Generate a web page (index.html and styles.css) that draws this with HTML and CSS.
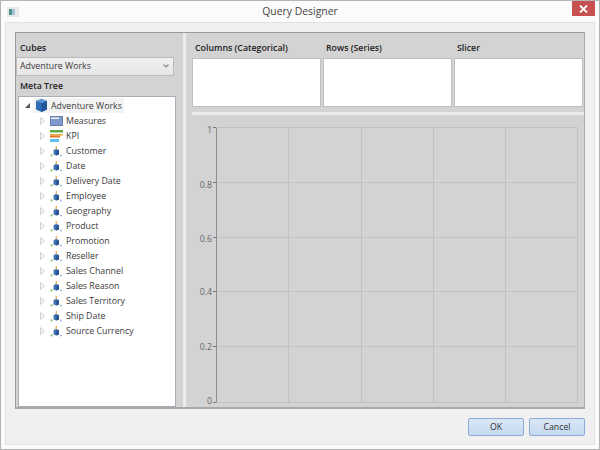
FILE: index.html
```html
<!DOCTYPE html>
<html lang="en">
<head>
  <meta charset="UTF-8">
  <title>Query Designer</title>
  <link rel="stylesheet" href="styles.css">
</head>
<body>
  <svg width="0" height="0" class="defs">
    <symbol id="dim" viewBox="0 0 13 12">
      <rect x="5.6" y="1" width="1.4" height="3.5" fill="#f0b060"/>
      <path d="M6.3 4 L9 5 V9.6 L6.3 10.6 L3.6 9.6 V5 Z" fill="#3f6fae"/>
      <path d="M6.3 6 L9 5 V9.6 L6.3 10.6 Z" fill="#2a5491"/>
      <circle cx="1.6" cy="10.4" r="1.1" fill="#8cc46e"/>
      <circle cx="11" cy="10.4" r="1" fill="#9db8dc"/>
    </symbol>
  </svg>
  <div class="window">
    <div class="titlebar">
      <svg class="app-icon" width="12" height="10" viewBox="0 0 12 10">
        <rect x="0" y="0" width="12" height="10" fill="#e6eae8"/>
        <rect x="2" y="2" width="3" height="6" fill="#4f9488"/>
        <rect x="5" y="2" width="3" height="6" fill="#a8c4d8"/>
      </svg>
      <span class="title">Query Designer</span>
      <div class="close">
        <svg width="9" height="8" viewBox="0 0 9 8">
          <path d="M1 0.5 L8 7.5 M8 0.5 L1 7.5" stroke="#fff" stroke-width="1.8"/>
        </svg>
      </div>
    </div>
    <div class="client">
      <div class="main">
        <div class="left">
          <div class="label cubes-label">Cubes</div>
          <div class="combo">
            <span>Adventure Works</span>
            <svg width="6" height="4" viewBox="0 0 6 4"><path d="M0.5 0.5 L3 3 L5.5 0.5" stroke="#888" stroke-width="1.1" fill="none"/></svg>
          </div>
          <div class="label tree-label">Meta Tree</div>
          <div class="tree">
            <div class="row root">
              <svg class="arrow" width="5" height="5" viewBox="0 0 5 5"><path d="M5 0 V5 H0 Z" fill="#555"/></svg>
              <div class="root-item">
                <svg width="11" height="13" viewBox="0 0 11 13">
                  <path d="M5.5 0 L11 2 V10.5 L5.5 13 L0 10.5 V2 Z" fill="#2f6cb4"/>
                  <path d="M5.5 4 L11 2 V10.5 L5.5 13 Z" fill="#1f5597"/>
                  <path d="M5.5 0 L11 2 L5.5 4 L0 2 Z" fill="#5c93d0"/>
                </svg>
                <span>Adventure Works</span>
              </div>
            </div>
            <div class="row">
              <svg class="arrow" width="5" height="8" viewBox="0 0 5 8"><path d="M0.5 0.5 L4.5 4 L0.5 7.5 Z" fill="#f6f6f6" stroke="#d0d0d0"/></svg>
              <svg class="icon" width="13" height="10" viewBox="0 0 13 10">
                <rect x="0.5" y="0.5" width="12" height="9" fill="#7f9aca" stroke="#6680ad"/>
                <rect x="1" y="1.5" width="8" height="1.5" fill="#eef2f8"/>
              </svg>
              <span>Measures</span>
            </div>
            <div class="row">
              <svg class="arrow" width="5" height="8" viewBox="0 0 5 8"><path d="M0.5 0.5 L4.5 4 L0.5 7.5 Z" fill="#f6f6f6" stroke="#d0d0d0"/></svg>
              <svg class="icon" width="13" height="12" viewBox="0 0 13 12">
                <rect x="0" y="0" width="13" height="2.5" fill="#5fa84a"/>
                <rect x="0" y="4" width="13" height="1.5" fill="#e9a33c"/>
                <rect x="0" y="5.5" width="10" height="2" fill="#e07a28"/>
                <rect x="0" y="9" width="9" height="3" fill="#5cc0ee"/>
              </svg>
              <span>KPI</span>
            </div>
            <div class="row"><svg class="arrow" width="5" height="8" viewBox="0 0 5 8"><path d="M0.5 0.5 L4.5 4 L0.5 7.5 Z" fill="#f6f6f6" stroke="#d0d0d0"/></svg><svg class="icon" width="13" height="12"><use href="#dim"/></svg><span>Customer</span></div>
            <div class="row"><svg class="arrow" width="5" height="8" viewBox="0 0 5 8"><path d="M0.5 0.5 L4.5 4 L0.5 7.5 Z" fill="#f6f6f6" stroke="#d0d0d0"/></svg><svg class="icon" width="13" height="12"><use href="#dim"/></svg><span>Date</span></div>
            <div class="row"><svg class="arrow" width="5" height="8" viewBox="0 0 5 8"><path d="M0.5 0.5 L4.5 4 L0.5 7.5 Z" fill="#f6f6f6" stroke="#d0d0d0"/></svg><svg class="icon" width="13" height="12"><use href="#dim"/></svg><span>Delivery Date</span></div>
            <div class="row"><svg class="arrow" width="5" height="8" viewBox="0 0 5 8"><path d="M0.5 0.5 L4.5 4 L0.5 7.5 Z" fill="#f6f6f6" stroke="#d0d0d0"/></svg><svg class="icon" width="13" height="12"><use href="#dim"/></svg><span>Employee</span></div>
            <div class="row"><svg class="arrow" width="5" height="8" viewBox="0 0 5 8"><path d="M0.5 0.5 L4.5 4 L0.5 7.5 Z" fill="#f6f6f6" stroke="#d0d0d0"/></svg><svg class="icon" width="13" height="12"><use href="#dim"/></svg><span>Geography</span></div>
            <div class="row"><svg class="arrow" width="5" height="8" viewBox="0 0 5 8"><path d="M0.5 0.5 L4.5 4 L0.5 7.5 Z" fill="#f6f6f6" stroke="#d0d0d0"/></svg><svg class="icon" width="13" height="12"><use href="#dim"/></svg><span>Product</span></div>
            <div class="row"><svg class="arrow" width="5" height="8" viewBox="0 0 5 8"><path d="M0.5 0.5 L4.5 4 L0.5 7.5 Z" fill="#f6f6f6" stroke="#d0d0d0"/></svg><svg class="icon" width="13" height="12"><use href="#dim"/></svg><span>Promotion</span></div>
            <div class="row"><svg class="arrow" width="5" height="8" viewBox="0 0 5 8"><path d="M0.5 0.5 L4.5 4 L0.5 7.5 Z" fill="#f6f6f6" stroke="#d0d0d0"/></svg><svg class="icon" width="13" height="12"><use href="#dim"/></svg><span>Reseller</span></div>
            <div class="row"><svg class="arrow" width="5" height="8" viewBox="0 0 5 8"><path d="M0.5 0.5 L4.5 4 L0.5 7.5 Z" fill="#f6f6f6" stroke="#d0d0d0"/></svg><svg class="icon" width="13" height="12"><use href="#dim"/></svg><span>Sales Channel</span></div>
            <div class="row"><svg class="arrow" width="5" height="8" viewBox="0 0 5 8"><path d="M0.5 0.5 L4.5 4 L0.5 7.5 Z" fill="#f6f6f6" stroke="#d0d0d0"/></svg><svg class="icon" width="13" height="12"><use href="#dim"/></svg><span>Sales Reason</span></div>
            <div class="row"><svg class="arrow" width="5" height="8" viewBox="0 0 5 8"><path d="M0.5 0.5 L4.5 4 L0.5 7.5 Z" fill="#f6f6f6" stroke="#d0d0d0"/></svg><svg class="icon" width="13" height="12"><use href="#dim"/></svg><span>Sales Territory</span></div>
            <div class="row"><svg class="arrow" width="5" height="8" viewBox="0 0 5 8"><path d="M0.5 0.5 L4.5 4 L0.5 7.5 Z" fill="#f6f6f6" stroke="#d0d0d0"/></svg><svg class="icon" width="13" height="12"><use href="#dim"/></svg><span>Ship Date</span></div>
            <div class="row"><svg class="arrow" width="5" height="8" viewBox="0 0 5 8"><path d="M0.5 0.5 L4.5 4 L0.5 7.5 Z" fill="#f6f6f6" stroke="#d0d0d0"/></svg><svg class="icon" width="13" height="12"><use href="#dim"/></svg><span>Source Currency</span></div>
          </div>
        </div>
        <div class="right">
          <div class="drops">
            <div class="drop drop-a">
              <div class="label">Columns (Categorical)</div>
              <div class="box"></div>
            </div>
            <div class="drop drop-b">
              <div class="label">Rows (Series)</div>
              <div class="box"></div>
            </div>
            <div class="drop drop-c">
              <div class="label">Slicer</div>
              <div class="box"></div>
            </div>
          </div>
          <div class="hsplit"></div>
          <svg class="chart" width="397" height="292" viewBox="0 0 397 292">
            <g stroke="#c2c2c2" stroke-width="1">
              <path d="M30.5 12.5 H391.5 M30.5 67.5 H391.5 M30.5 122.5 H391.5 M30.5 176.5 H391.5 M30.5 231.5 H391.5 M30.5 287.5 H391.5"/>
              <path d="M102.5 12.5 V287.5 M175.5 12.5 V287.5 M247.5 12.5 V287.5 M319.5 12.5 V287.5 M391.5 12.5 V287.5"/>
            </g>
            <path d="M30.5 12.5 V287.5" stroke="#8e8e8e"/>
            <path d="M27 12.5 H30 M27 67.5 H30 M27 122.5 H30 M27 176.5 H30 M27 231.5 H30 M27 287.5 H30" stroke="#777"/>
            <g class="ticks" text-anchor="end">
              <text x="26" y="17.5">1</text>
              <text x="26" y="72.5">0.8</text>
              <text x="26" y="126.5">0.6</text>
              <text x="26" y="179.5">0.4</text>
              <text x="26" y="234.5">0.2</text>
              <text x="26" y="288.5">0</text>
            </g>
          </svg>
        </div>
      </div>
      <div class="buttons">
        <button class="btn">OK</button>
        <button class="btn">Cancel</button>
      </div>
    </div>
  </div>
</body>
</html>
```

FILE: styles.css
```css
html, body {
  margin: 0;
  padding: 0;
}
body {
  width: 600px;
  height: 450px;
  overflow: hidden;
  font-family: 'Open Sans', 'Noto Sans', sans-serif;
  font-size: 8.8px;
  color: #3a3a3a;
}
.defs {
  position: absolute;
}
.window {
  width: 600px;
  height: 450px;
  box-sizing: border-box;
  border: 1px solid #b4b4b4;
  background: #fbfbfb;
  display: flex;
  flex-direction: column;
}
.titlebar {
  height: 21px;
  flex: none;
  display: flex;
  align-items: flex-start;
  justify-content: center;
  position: relative;
}
.app-icon {
  position: absolute;
  left: 6px;
  top: 6px;
}
.title {
  font-size: 10.4px;
  color: #444;
  margin-top: 3px;
}
.close {
  position: absolute;
  right: 4px;
  top: 0;
  width: 23px;
  height: 15px;
  background: #c75050;
  display: flex;
  align-items: center;
  justify-content: center;
}
.client {
  flex: 1;
  margin: 0 4px 4px 4px;
  background: #f0f0f0;
  border: 1px solid #e2e2e2;
  padding: 9px 9px 0 9px;
  display: flex;
  flex-direction: column;
}
.main {
  width: 570px;
  height: 377px;
  flex: none;
  box-sizing: border-box;
  background: #d3d3d3;
  border-top: 1px solid #9a9a9a;
  border-left: 1px solid #9a9a9a;
  border-bottom: 2px solid #a8a8a8;
  border-right: 1px solid #a8a8a8;
  display: flex;
}
.left {
  width: 170px;
  flex: none;
  box-sizing: border-box;
  border-right: 3px solid #ececec;
  display: flex;
  flex-direction: column;
}
.label {
  font-weight: 600;
  color: #222;
  line-height: 13px;
}
.cubes-label {
  padding: 9px 0 2px 4px;
}
.combo {
  width: 158px;
  height: 19px;
  flex: none;
  box-sizing: border-box;
  border: 1px solid #bcbcbc;
  background: linear-gradient(#f0f0f0, #e6e6e6);
  padding: 0 4px 1px 3px;
  display: flex;
  align-items: center;
  justify-content: space-between;
}
.tree-label {
  padding: 4px 0 3px 4px;
}
.tree {
  width: 158px;
  height: 311px;
  flex: none;
  margin-left: 2px;
  box-sizing: border-box;
  border: 1px solid #a9afb6;
  background: #fff;
  padding: 1px 0 0 5px;
}
.row {
  height: 15px;
  display: flex;
  align-items: center;
}
.arrow {
  flex: none;
  margin: 0 5px 0 16px;
}
.root .arrow {
  margin: 0 3px 0 1px;
}
.icon {
  flex: none;
  margin-right: 3px;
}
.root-item {
  display: flex;
  align-items: center;
  gap: 4px;
  height: 15px;
  background: #f3f3f3;
  padding: 0 2px 0 3px;
}
.right {
  flex: 1;
  display: flex;
  flex-direction: column;
  min-width: 0;
}
.drops {
  display: flex;
  padding-left: 6px;
  height: 76px;
  flex: none;
}
.drop {
  display: flex;
  flex-direction: column;
}
.drop .label {
  padding: 9px 0 3px 3px;
}
.drop-a,
.drop-b {
  width: 131px;
}
.drop-c {
  width: 129px;
}
.box {
  width: 129px;
  height: 49px;
  box-sizing: border-box;
  background: #fff;
  border: 1px solid #c0c0c0;
}
.hsplit {
  height: 3px;
  flex: none;
  margin: 3px 0 0 6px;
  background: #ececec;
}
.chart {
  display: block;
  flex: none;
}
.ticks {
  font-size: 8.8px;
  fill: #666;
}
.buttons {
  display: flex;
  justify-content: flex-end;
  gap: 5px;
  padding: 9px 0 0 0;
}
.btn {
  width: 56px;
  height: 18px;
  padding: 0;
  border: 1px solid #8cacd8;
  border-radius: 2px;
  background: linear-gradient(#dbe7f5, #c4d9f0);
  font-family: 'Open Sans', sans-serif;
  font-size: 8.8px;
  color: #333;
}
```
